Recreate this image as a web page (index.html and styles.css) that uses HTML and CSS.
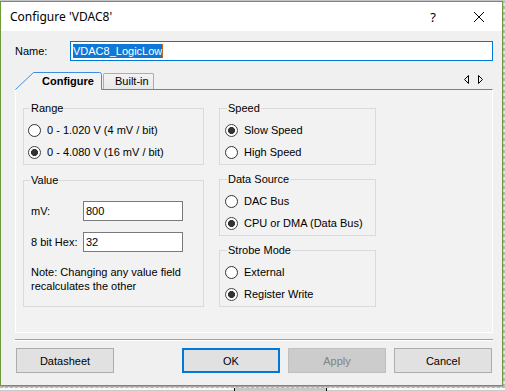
FILE: index.html
```html
<!DOCTYPE html>
<html lang="en">
<head>
    <meta charset="UTF-8">
    <title>Configure 'VDAC8'</title>
    <link rel="stylesheet" href="styles.css">
</head>
<body>
    <div class="dialog">
        <div class="titlebar">
            <span class="title">Configure 'VDAC8'</span>
            <span class="tb-btn">?</span>
            <span class="tb-btn">
                <svg width="10" height="10" viewBox="0 0 10 10"><path d="M0 0L10 10M10 0L0 10" stroke="#000" stroke-width="1"/></svg>
            </span>
        </div>

        <div class="content">
            <div class="name-row">
                <label>Name:</label>
                <div class="name-field"><span class="selected-text">VDAC8_LogicLow</span><span class="caret"></span></div>
            </div>

            <div class="tab-strip">
                <div class="tab active">
                    <svg class="tab-shape" width="88" height="18" viewBox="0 0 88 18">
                        <path d="M0 18L0.5 17.5L18.5 0.5L84.5 0.5Q86.5 0.5 86.5 2.5L86.5 18Z" fill="#f2f2f2"/>
                        <path d="M0.5 17.5L18.5 0.5L84.5 0.5Q86.5 0.5 86.5 2.5L86.5 17.5" fill="none" stroke="#3d8ee0" stroke-width="1"/>
                    </svg>
                    <span class="tab-label">Configure</span>
                </div>
                <div class="tab">Built-in</div>
                <div class="tab-arrows">
                    <svg width="20" height="9" viewBox="0 0 20 9">
                        <path d="M4.5 0.5L0.5 4.5L4.5 8.5Z" fill="none" stroke="#000"/>
                        <path d="M14.5 0.5L18.5 4.5L14.5 8.5Z" fill="none" stroke="#000"/>
                    </svg>
                </div>
            </div>

            <div class="tab-panel">
                <div class="col col-left">
                    <fieldset class="group">
                        <legend>Range</legend>
                        <label class="opt"><input type="radio" name="range">0 - 1.020 V (4 mV / bit)</label>
                        <label class="opt"><input type="radio" name="range" checked>0 - 4.080 V (16 mV / bit)</label>
                    </fieldset>
                    <fieldset class="group value">
                        <legend>Value</legend>
                        <div class="field-row first">
                            <label>mV:</label>
                            <input type="text" value="800">
                        </div>
                        <div class="field-row">
                            <label>8 bit Hex:</label>
                            <input type="text" value="32">
                        </div>
                        <p class="note">Note: Changing any value field<br>recalculates the other</p>
                    </fieldset>
                </div>
                <div class="col col-right">
                    <fieldset class="group">
                        <legend>Speed</legend>
                        <label class="opt"><input type="radio" name="speed" checked>Slow Speed</label>
                        <label class="opt"><input type="radio" name="speed">High Speed</label>
                    </fieldset>
                    <fieldset class="group">
                        <legend>Data Source</legend>
                        <label class="opt"><input type="radio" name="source">DAC Bus</label>
                        <label class="opt"><input type="radio" name="source" checked>CPU or DMA (Data Bus)</label>
                    </fieldset>
                    <fieldset class="group">
                        <legend>Strobe Mode</legend>
                        <label class="opt"><input type="radio" name="strobe">External</label>
                        <label class="opt"><input type="radio" name="strobe" checked>Register Write</label>
                    </fieldset>
                </div>
            </div>

            <div class="separator"></div>

            <div class="buttons">
                <button class="btn">Datasheet</button>
                <button class="btn btn-default">OK</button>
                <button class="btn" disabled>Apply</button>
                <button class="btn">Cancel</button>
            </div>
        </div>
    </div>

    <div class="canvas-strip">
        <div class="canvas-block"></div>
    </div>
</body>
</html>
```

FILE: styles.css
```css
* {
    margin: 0;
    padding: 0;
    box-sizing: border-box;
}

body {
    width: 505px;
    height: 391px;
    overflow: hidden;
    background: repeating-linear-gradient(to bottom, #c9c9c9 0 3px, #fafafa 3px 6px);
    font-family: 'Liberation Sans', Arial, sans-serif;
    font-size: 11px;
    color: #000;
}

.dialog {
    width: 503px;
    height: 385px;
    margin-top: 1px;
    border: 1px solid #6e9a3c;
    background: #f0f0f0;
    box-shadow: 1px 1px 2px rgba(0, 0, 0, 0.25);
}

.titlebar {
    height: 29px;
    background: #ffffff;
    display: flex;
    align-items: center;
}

.title {
    flex: 1;
    padding-left: 9px;
    font-family: 'Noto Sans', 'Open Sans', sans-serif;
    font-size: 12px;
}

.tb-btn {
    width: 46px;
    height: 29px;
    display: flex;
    align-items: center;
    justify-content: center;
    font-family: 'Noto Sans', sans-serif;
    font-size: 13px;
}

.content {
    padding: 10px 9px 12px 14px;
}

.name-row {
    display: flex;
    align-items: center;
    height: 20px;
}

.name-row label {
    width: 55px;
}

.name-field {
    flex: 1;
    height: 20px;
    padding: 2px;
    border: 1px solid #0078d7;
    background: #ffffff;
    display: flex;
}

.selected-text {
    background: #0f78d6;
    color: #ffffff;
    line-height: 14px;
    height: 14px;
}

.caret {
    width: 1px;
    height: 14px;
    background: #c2651c;
}

.tab-strip {
    display: flex;
    align-items: flex-end;
    height: 17px;
    margin-top: 11px;
}

.tab {
    height: 16px;
    width: 51px;
    padding-left: 11px;
    line-height: 15px;
    border: 1px solid #acacac;
    border-bottom: none;
    border-radius: 2px 2px 0 0;
    background: linear-gradient(#f3f3f3, #e8e8e8);
}

.tab.active {
    position: relative;
    z-index: 1;
    width: 88px;
    height: 18px;
    margin-bottom: -1px;
    padding-left: 27px;
    border: none;
    background: none;
    line-height: 18px;
    font-weight: bold;
}

.tab-shape {
    position: absolute;
    left: 0;
    top: 0;
}

.tab-label {
    position: relative;
}

.tab-arrows {
    align-self: flex-start;
    margin: 3px 9px 0 auto;
    display: flex;
}

.tab-panel {
    height: 244px;
    border: 1px solid #ffffff;
    border-top-color: #3d8ee0;
    background: #f2f2f2;
    display: flex;
    gap: 15px;
    padding: 11px 0 0 7px;
}

.col-left {
    width: 181px;
}

.col-right {
    width: 157px;
}

.group {
    border: 1px solid #dadada;
    padding: 4px 0 1px 4px;
}

.col-right .group {
    padding-left: 5px;
}

.group + .group {
    margin-top: 7px;
}

.col-left .group + .group {
    margin-top: 8px;
}

.group legend {
    margin-left: 2px;
    padding: 0 1px;
    line-height: 14px;
}

.opt {
    display: flex;
    align-items: center;
    gap: 6px;
    height: 22px;
}

.opt input {
    appearance: none;
    -webkit-appearance: none;
    width: 13px;
    height: 13px;
    margin: 0;
    border: 1px solid #333333;
    border-radius: 50%;
    background: #ffffff;
}

.opt input:checked {
    border-color: #444444;
    background: radial-gradient(circle, #333333 0 3.2px, #ffffff 3.8px);
}

.group.value {
    padding: 0 0 13px 7px;
}

.group.value legend {
    margin-left: -1px;
}

.field-row {
    display: flex;
    align-items: center;
    height: 20px;
    margin-top: 11px;
}

.field-row.first {
    margin-top: 14px;
}

.field-row label {
    width: 52px;
}

.field-row input {
    width: 100px;
    height: 20px;
    padding: 0 2px;
    border: 1px solid #7a7a7a;
    background: #ffffff;
    font-family: inherit;
    font-size: 11px;
    color: #000;
    outline: none;
}

.note {
    margin-top: 13px;
    line-height: 14px;
}

.separator {
    margin-top: 6px;
    height: 2px;
    border-top: 1px solid #a0a0a0;
    border-bottom: 1px solid #ffffff;
}

.buttons {
    display: flex;
    gap: 8px;
    margin: 7px 1px 0 1px;
}

.btn {
    width: 98px;
    height: 25px;
    border: 1px solid #adadad;
    background: #e1e1e1;
    font-family: inherit;
    font-size: 11px;
    color: #000;
}

.btn:first-child {
    margin-right: auto;
}

.btn-default {
    border: 2px solid #0078d7;
}

.btn:disabled {
    background: #cccccc;
    border-color: #bfbfbf;
    color: #838383;
}

.canvas-strip {
    height: 5px;
    margin-top: 1px;
    border-top: 1px dashed #b8b8b8;
    display: flex;
}

.canvas-block {
    margin-left: 234px;
    width: 93px;
    background: #c8c8c8;
    border-left: 1px solid #000;
    border-right: 1px solid #000;
}
```
